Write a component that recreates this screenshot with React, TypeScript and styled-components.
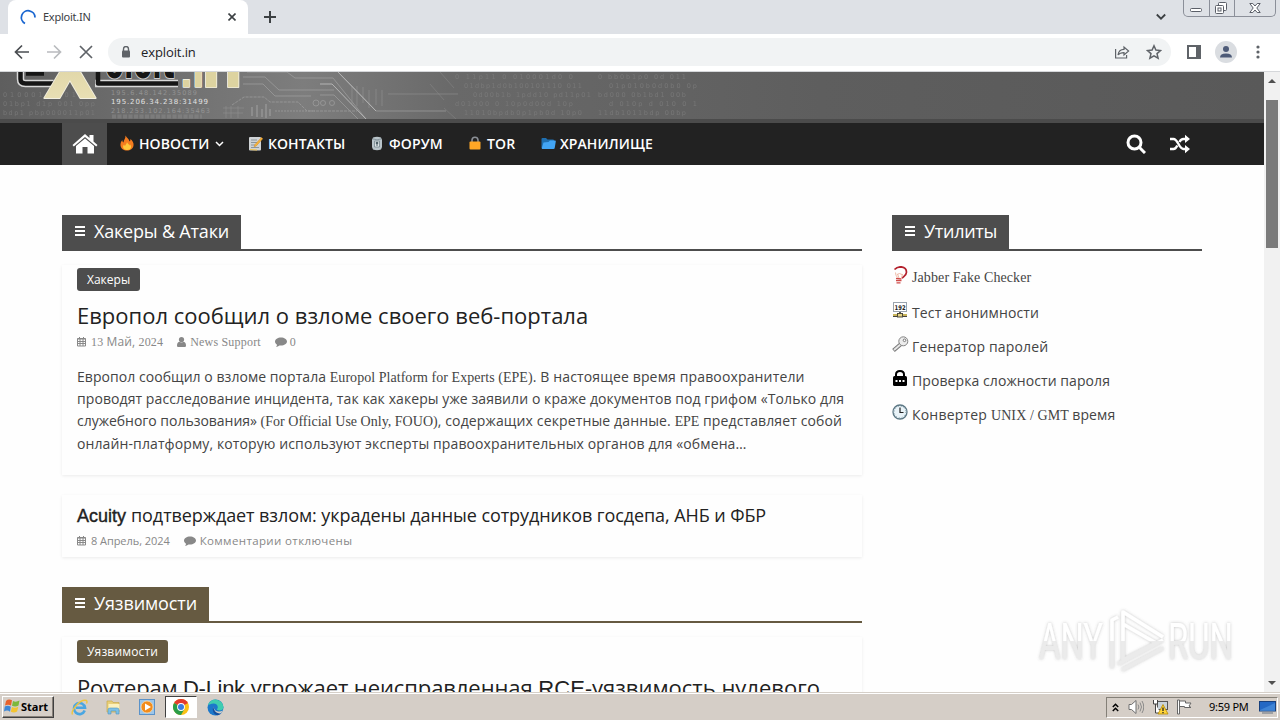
import React from "react";
import styled, { createGlobalStyle, css } from "styled-components";

const GlobalStyle = createGlobalStyle`
  * { box-sizing: border-box; }
  html, body { margin: 0; padding: 0; height: 720px; overflow: hidden; }
  svg { display: block; flex: none; }
`;

const sans = `"Open Sans", "Noto Sans", sans-serif`;
const serif = `"Liberation Serif", serif`;
const ui = `"Noto Sans", sans-serif`;

const Screen = styled.div`
  width: 1280px;
  height: 720px;
  display: flex;
  flex-direction: column;
  overflow: hidden;
  background: #fff;
  font-family: ${sans};
`;

const Txt = styled.span<{ $ls?: number; $size?: number; $serif?: boolean; $arial?: boolean; $heavy?: boolean }>`
  display: inline-block;
  white-space: pre;
  letter-spacing: ${(p) => p.$ls || 0}px;
  ${(p) => p.$size && css`font-size: ${p.$size}px;`}
  ${(p) => p.$serif && css`font-family: ${serif};`}
  ${(p) => p.$arial && css`font-family: "Liberation Sans", sans-serif;`}
  ${(p) => p.$heavy && css`-webkit-text-stroke: 0.4px currentColor;`}
`;

/* browser */
const TabStrip = styled.div`
  height: 34px;
  flex: none;
  display: flex;
  background: #dee1e6;
  padding-left: 8px;
`;

const Tab = styled.div`
  width: 240px;
  height: 34px;
  display: flex;
  align-items: center;
  padding: 0 12px 0 12px;
  background: #fff;
  border-radius: 8px 8px 0 0;
  font-family: ${ui};
  font-size: 11px;
  color: #3c4043;
`;

const TabTitle = styled.div`
  flex: 1;
  padding: 0 0 1px 6px;
`;

const NewTab = styled.div`
  padding: 11px 0 0 16px;
  flex: 1;
`;

const TabSearch = styled.div`
  padding: 13px 17px 0 0;
`;

const WindowButtons = styled.div`
  display: flex;
  width: 93px;
  height: 17px;
  margin-right: 4px;
  border: 1px solid #8b8f99;
  border-top: 0;
  border-radius: 0 0 5px 5px;
`;

const WindowButton = styled.div<{ $w: number }>`
  width: ${(p) => p.$w}px;
  display: flex;
  justify-content: center;
  & + & { border-left: 1px solid #8b8f99; }
`;

const Toolbar = styled.div`
  height: 38px;
  flex: none;
  display: flex;
  align-items: center;
  padding: 0 14px 1px 14px;
  border-bottom: 1px solid #d5d7da;
`;

const NavButtons = styled.div`
  display: flex;
  gap: 16px;
  width: 94px;
`;

const AddressBar = styled.div`
  width: 1063px;
  height: 28px;
  border-radius: 14px;
  background: #f1f3f4;
  display: flex;
  align-items: center;
  padding: 0 9px 0 12px;
  color: #202124;
`;

const Url = styled.div`
  flex: 1;
  padding-left: 9px;
  font-size: 13px;
`;

const BarActions = styled.div`
  display: flex;
  align-items: center;
  gap: 16px;
`;

const Tools = styled.div`
  flex: 1;
  display: flex;
  align-items: center;
  justify-content: space-between;
  padding-left: 16px;
`;

/* page */
const Viewport = styled.div`
  height: 620px;
  flex: none;
  display: flex;
`;

const Page = styled.div`
  width: 1264px;
  height: 620px;
  overflow: hidden;
  background: #fefefe;
`;

const Banner = styled.div`
  height: 51px;
  background: #5a5a5a;
  border-bottom: 4px solid #4b4b4b;
  overflow: hidden;
`;

const Menu = styled.div`
  height: 42px;
  background: #222;
  padding: 0 74px 0 62px;
  display: flex;
  align-items: center;
  color: #fff;
  font-size: 14px;
  font-weight: 600;
`;

const HomeLink = styled.div`
  width: 45px;
  height: 42px;
  background: #4d4d4d;
  display: flex;
  align-items: center;
  justify-content: center;
`;

const MenuItem = styled.div<{ $w: number; $gap?: number }>`
  width: ${(p) => p.$w}px;
  display: flex;
  align-items: center;
  gap: ${(p) => p.$gap || 4}px;
  padding: 0 0 2px 12px;
`;

const Caret = styled.div`
  padding: 1px 0 0 2px;
`;

const MenuTools = styled.div`
  flex: 1;
  display: flex;
  justify-content: flex-end;
  gap: 24px;
`;

const Content = styled.div`
  display: flex;
  gap: 30px;
  padding: 50px 62px 0;
`;

const Main = styled.div`
  width: 800px;
`;

const Aside = styled.div`
  width: 310px;
`;

const SectionHead = styled.div<{ $color: string; $mt?: number }>`
  height: 36px;
  margin-top: ${(p) => p.$mt || 0}px;
  border-bottom: 2px solid ${(p) => p.$color};
  display: flex;
`;

const SectionLabel = styled.div<{ $color: string }>`
  height: 36px;
  background: ${(p) => p.$color};
  color: #fff;
  display: flex;
  gap: 9px;
  padding: 0 12px 0 13px;
  font-size: 18px;
  line-height: 32px;
`;

const Burger = styled.div`
  width: 10px;
  height: 10px;
  margin-top: 11px;
  border-top: 2px solid #fff;
  border-bottom: 2px solid #fff;
  padding-top: 2px;
  &::before { content: ""; display: block; height: 2px; background: #fff; }
`;

const Card = styled.div<{ $h: number; $mt: number }>`
  height: ${(p) => p.$h}px;
  margin-top: ${(p) => p.$mt}px;
  padding: 3px 15px 0;
  box-shadow: 0 1px 3px rgba(0, 0, 0, 0.08);
`;

const Badge = styled.div<{ $color: string }>`
  width: fit-content;
  height: 23px;
  padding: 0 10px;
  border-radius: 3px;
  background: ${(p) => p.$color};
  color: #fff;
  font-size: 12px;
  line-height: 23px;
`;

const Title = styled.div<{ $small?: boolean }>`
  color: #222;
  white-space: nowrap;
  font-size: ${(p) => (p.$small ? 18 : 22)}px;
  line-height: ${(p) => (p.$small ? 34 : 30)}px;
  padding-top: ${(p) => (p.$small ? 0 : 9)}px;
`;

const Meta = styled.div<{ $mt?: number }>`
  display: flex;
  align-items: center;
  height: 16px;
  margin-top: ${(p) => p.$mt || 0}px;
  color: #888;
  font-size: 12px;
  line-height: 16px;
`;

const MetaItem = styled.div<{ $gap: number }>`
  display: flex;
  align-items: center;
  gap: ${(p) => p.$gap}px;
  margin-right: 14px;
`;

const Excerpt = styled.div`
  margin-top: 15.600px;
  color: #444;
  font-size: 14px;
  line-height: 22.4px;
`;

const Line = styled.div`
  height: 22.4px;
  white-space: nowrap;
`;

const ToolList = styled.div`
  padding-top: 14px;
`;

const Tool = styled.div<{ $h?: number }>`
  display: flex;
  gap: 4px;
  height: ${(p) => p.$h || 34}px;
  color: #444;
  font-size: 14px;
  line-height: 22px;
`;

const ToolIcon = styled.div`
  width: 16px;
  padding-top: 1px;
`;

const ToolText = styled.div`
  padding-top: 1px;
  white-space: nowrap;
`;

const Scrollbar = styled.div`
  width: 16px;
  background: #f1f1f1;
  display: flex;
  flex-direction: column;
  align-items: center;
  justify-content: space-between;
  padding: 7px 0 7px;
`;

const Thumb = styled.div`
  width: 12px;
  height: 148px;
  margin: 17px 0 auto;
  background: #7b7b7b;
`;

const Watermark = styled.div`
  position: absolute;
  left: 1032px;
  top: 602px;
`;

/* taskbar */
const Taskbar = styled.div`
  flex: 1;
  display: flex;
  align-items: center;
  background: #d5cec7;
  border-top: 1px solid #d5cfc8;
  box-shadow: inset 0 1px 0 #fff;
  padding: 1px 2px 0 2px;
  font-family: ${ui};
  font-size: 11px;
  color: #000;
`;

const StartButton = styled.div`
  width: 52px;
  height: 22px;
  display: flex;
  align-items: center;
  padding: 0 0 2px 1px;
  border: 1px solid;
  border-color: #fff #404040 #404040 #fff;
  box-shadow: inset -1px -1px 0 #878079;
  font-weight: 700;
`;

const Launchers = styled.div`
  display: flex;
  flex: 1;
  padding-left: 9px;
`;

const Launcher = styled.div<{ $active?: boolean }>`
  width: 32px;
  height: 22px;
  margin-right: 2px;
  display: flex;
  align-items: center;
  justify-content: center;
  ${(p) => p.$active && css`
    background: #fff;
    border: 1px solid;
    border-color: #404040 #fff #fff #404040;
  `}
`;

const Tray = styled.div`
  width: 172px;
  height: 21px;
  display: flex;
  align-items: center;
  border: 1px solid;
  border-color: #848078 #fff #fff #848078;
  padding: 0 1px 0 5px;
  gap: 8px;
`;

const Clock = styled.div`
  flex: 1;
  padding: 0 0 2px 7px;
`;

/* icons */
const Calendar = () => (
  <svg width="10" height="10" viewBox="0 0 10 10" stroke="#888" fill="none">
    <path d="M.5 1.500h8v7.500h-8zM.5 2h8M.5 4.500h8M.5 6.500h8M3 2v7M6 2v7M2.500 0v2M6.500 0v2" />
  </svg>
);

const Person = () => (
  <svg width="9" height="10" viewBox="0 0 9 10" fill="#888">
    <circle cx="4.500" cy="2.600" r="2.600" />
    <path d="M0 8.500C0 6 1.300 5 2.500 4.800c1.200.9 2.800.9 4 0C7.700 5 9 6 9 8.500c0 1-.6 1.500-1.500 1.500h-6C.6 10 0 9.500 0 8.500z" />
  </svg>
);

const Comment = () => (
  <svg width="12" height="10" viewBox="0 0 12 10" fill="#888">
    <path d="M6 .5c3.300 0 6 1.700 6 4s-2.700 4-6 4c-.6 0-1 0-1.500-.1C3.400 9.300 2.200 9.800 1 10c.6-.7 1-1.400 1-2.300C.8 7 0 5.800 0 4.500c0-2.300 2.700-4 6-4z" />
  </svg>
);

const digits = (seed: number, n: number) => {
  let s = "";
  let v = seed;
  for (let i = 0; i < n; i++) {
    v = (v * 73 + 41) % 997;
    s += v % 5 === 0 ? "0" : v % 7 === 0 ? " " : "01d0p1b"[v % 7];
  }
  return s;
};

const BannerArt = () => (
  <svg width="1264" height="47" viewBox="0 0 1264 47">
    <defs>
      <linearGradient id="bg" x1="0" x2="1" y1="0" y2="0">
        <stop offset="0" stopColor="#5e5e5e" />
        <stop offset=".1" stopColor="#6c6c6c" />
        <stop offset=".24" stopColor="#7d7d7d" />
        <stop offset=".36" stopColor="#696969" />
        <stop offset=".65" stopColor="#5e5e5e" />
        <stop offset="1" stopColor="#595959" />
      </linearGradient>
      <linearGradient id="cream" x1="0" x2="0" y1="0" y2="1">
        <stop offset="0" stopColor="#cfc48f" />
        <stop offset="1" stopColor="#efe6bd" />
      </linearGradient>
    </defs>
    <rect width="1264" height="47" fill="url(#bg)" />
    <g fontFamily="DejaVu Sans" fontSize="6.500" fill="#7e7e7e" opacity=".75">
      {[7, 16, 25, 34, 43].map((y, i) => (
        <React.Fragment key={y}>
          {i > 1 && <text x="3" y={y} textLength="92">{digits(i + 3, 17)}</text>}
          <text x={455 + (i % 3) * 9} y={y} textLength="118">{digits(i + 20, 22)}</text>
          <text x={598 + (i % 2) * 11} y={y} textLength="88">{digits(i + 50, 16)}</text>
        </React.Fragment>
      ))}
    </g>
    <g fontFamily="DejaVu Sans" fontSize="6.500" fill="#939393">
      <text x="111" y="23" textLength="86">195.6.48.142.35089</text>
      <text x="111" y="32" textLength="97" fontSize="7" fill="#e2e2e2">195.206.34.238:31499</text>
      <text x="111" y="40.500" textLength="99">218.253.102.164:35463</text>
    </g>
    <path d="M112 44.500h90" stroke="#8a8a8a" strokeWidth="4" strokeDasharray="4 1.500" opacity=".5" />
    <g fill="none" stroke="#a0a0a0" strokeWidth="1" opacity=".7">
      <path d="M243 5h22l14 13h55M243 12h20l12 12h36M247 0h40l8 6h38l33 41M338 0l38 39h70M320 23h14l24 24" />
      <path d="M232 33l12-8h20l6 5h28l9 9h50" strokeDasharray="3 1" />
      <path d="M223 36h21M223 41h20M226 34v12M231 34v12M238 34v12" opacity=".5" />
      <path d="M252 35v9M257 33v12M262 37v8M266 32v14M270 37v7" strokeWidth="1.500" />
      <path d="M275 39h40" strokeDasharray="2 1" />
      <path d="M352 14v18M357 14v20M363 15v16M369 18v18M376 17v16M382 18v16M388 22h70" opacity=".6" />
      <circle cx="316" cy="31" r="3" /><circle cx="323" cy="31" r="2.500" /><circle cx="332" cy="31" r="2.500" />
      <path d="M440 0l14 16M430 12l14 16M444 36l12 11" opacity=".4" />
    </g>
    <path d="M320 12h12l34 35M338 0l38 39" stroke="#b4b4b4" fill="none" />
    {/* logo, scrolled halfway under the toolbar */}
    <g fontFamily="DejaVu Sans" fontWeight="700" paintOrder="stroke" strokeLinejoin="round">
      <path d="M20.500 0v7q0 4.500 5 4.500h28M95 11.500h83" fill="none" stroke="#d8d8d8" strokeWidth="7.500" />
      <text x="105" y="6" fontSize="46" textLength="70" lengthAdjust="spacingAndGlyphs" fill="#161616" stroke="#cfcfcf" strokeWidth="2">oloit</text>
      <path d="M20.500 0v7q0 4.500 5 4.500h28M98 0v11.500h80M26 1.500h18" fill="none" stroke="#161616" strokeWidth="4.500" />
      <text x="43" y="26" fontSize="104" textLength="54" lengthAdjust="spacingAndGlyphs" fill="url(#cream)" stroke="#f3f0e2" strokeWidth="2">x</text>
      <text x="180" y="15" fontSize="38" textLength="24" lengthAdjust="spacingAndGlyphs" fill="#ddd3a0" stroke="#f3f0e2" strokeWidth="1.600">.i</text>
      <text x="201" y="15" fontSize="54" textLength="42" lengthAdjust="spacingAndGlyphs" fill="#ddd3a0" stroke="#f3f0e2" strokeWidth="1.600">n</text>
    </g>
  </svg>
);

const Fire = () => (
  <svg width="16" height="16" viewBox="0 0 16 16">
    <path d="M6.500.5C8 3 10 4 10.500 6.500c.8-.5 1-1.500.9-2.500C13.500 5.500 15 8 14.500 10.500 14 13.800 11.300 15.500 8 15.500S1.800 13.500 1.500 10.500C1.300 8.500 2 6.500 3.300 5c0 1.300.4 2 1.200 2.500C4.500 5 6.800 3.500 6.500.5z" fill="#f57c1f" />
    <path d="M8 7c.3 1.500 2 2 2.300 3.500.4-.3.500-.8.500-1.300 1 1 1.500 2 1.200 3.300-.4 1.700-2 2.500-4 2.500s-3.700-1-3.900-2.800c-.1-1 .3-2 1-2.700.1.800.5 1.200 1 1.400C6.300 9.500 7.800 9 8 7z" fill="#ffc93c" />
  </svg>
);

const Memo = () => (
  <svg width="15" height="15" viewBox="0 0 15 15">
    <rect x="1" y="1" width="12" height="13.500" rx="1" fill="#cfd3d6" />
    <path d="M3 4h6M3 6.500h6M3 9h4M3 11.500h8" stroke="#8b959b" />
    <path d="M13.500 1.500l1.200 1.200-6.500 7.300-2 .8.600-2z" fill="#f6b73c" stroke="#d98f2b" strokeWidth=".6" />
    <path d="M2 13.500L9 14" stroke="#f0c24b" />
  </svg>
);

const Barrel = () => (
  <svg width="12" height="15" viewBox="0 0 12 15">
    <path d="M2 1.500Q6 0 10 1.500L11 4v7l-1 2.500q-4 1.500-8 0L1 11V4z" fill="#b9c4ca" />
    <path d="M2 3q4 1.500 8 0M3.500 5h5v6h-5z" stroke="#75858d" fill="#dde4e7" strokeWidth=".8" />
    <circle cx="6" cy="7" r="1.300" fill="#4f6068" /><path d="M6 7v3" stroke="#4f6068" />
  </svg>
);

const Padlock = () => (
  <svg width="12" height="14" viewBox="0 0 12 14">
    <path d="M3 7V4.200a3 3 0 0 1 6 0V7" stroke="#8b8f96" strokeWidth="1.600" fill="none" />
    <rect x=".5" y="5.500" width="11" height="8" rx="1" fill="#ffa726" />
  </svg>
);

const Folder = () => (
  <svg width="15" height="13" viewBox="0 0 15 13">
    <path d="M.5 2q0-1 1-1H5l1.500 1.500H12q1 0 1 1V11H.5z" fill="#1f6fb0" />
    <path d="M2.500 5.500l5-.5 1.500-1.500h5q1 0 .8 1L13.700 11q-.2 1-1.200 1h-11Q.5 12 .8 11z" fill="#42a5f5" />
  </svg>
);

const Bulb = () => (
  <svg width="16" height="18" viewBox="0 0 16 18" fill="none">
    <path d="M2.500 3.500Q5 .8 9 .8q5.500.4 5.500 5.400c0 3-3 4.300-4.500 6" stroke="#b3202c" strokeWidth="1.700" />
    <path d="M3.500 6.500q0 3 2 5M5.500 8l1.500 4M10.500 8l-1 4M5 8.500l2.500-1 2.500 1" stroke="#eeb9a5" strokeWidth="1" />
    <path d="M4 12.500l5.500.5M4 14.700h5.500M4.500 16.800h4" stroke="#cf4a48" strokeWidth="1.300" />
  </svg>
);

const IpCard = () => (
  <svg width="16" height="16" viewBox="0 0 16 16">
    <rect x="1.500" y=".5" width="13" height="9" fill="#fff" stroke="#9aa3ad" />
    <text x="2.600" y="7.700" fontFamily="DejaVu Sans" fontWeight="700" fontSize="6.500" textLength="11" lengthAdjust="spacingAndGlyphs" fill="#222">192</text>
    <path d="M8 10v2" stroke="#555" strokeWidth="2" />
    <path d="M1 13h14" stroke="#c9b458" strokeWidth="2" /><path d="M1 14.500h14" stroke="#444" />
    <rect x="5.500" y="11.500" width="5" height="3.500" fill="#e3d286" stroke="#4c4a3a" />
  </svg>
);

const Key = () => (
  <svg width="17" height="17" viewBox="0 0 17 17">
    <path d="M9 8L1.500 14.500" stroke="#777" strokeWidth="4" /><path d="M9 8L2 14" stroke="#e6e6e6" strokeWidth="2" />
    <circle cx="11.300" cy="5.300" r="4.500" fill="#ececec" stroke="#858585" /><circle cx="12.500" cy="4.300" r="1.300" fill="#fff" stroke="#777" />
  </svg>
);

const BlackLock = () => (
  <svg width="16" height="17" viewBox="0 0 16 17">
    <path d="M4 7V4.500Q4 1 8 1t4 3.500V7" fill="none" stroke="#000" strokeWidth="2" />
    <rect x="1" y="6" width="14" height="10" rx="1.500" fill="#000" />
    <path d="M3.500 11h2M7 11h2M10.500 11h2" stroke="#fff" strokeWidth="2" />
  </svg>
);

const ClockFace = () => (
  <svg width="16" height="16" viewBox="0 0 16 16">
    <circle cx="8" cy="8" r="7" fill="#e9f3f8" stroke="#5b7683" strokeWidth="1.300" />
    <circle cx="8" cy="8" r="5.700" fill="none" stroke="#8fa9b5" strokeWidth="1" strokeDasharray="1 2" />
    <path d="M8 3.500V8.500h3.500" fill="none" stroke="#222" strokeWidth="1.200" />
  </svg>
);

const Chrome = () => (
  <svg width="16" height="16" viewBox="0 0 16 16">
    <circle cx="8" cy="8" r="8" fill="#fbc116" />
    <path d="M8 8L1.070 4A8 8 0 0 1 14.930 4z" fill="#e33b2e" />
    <path d="M8 8L1.070 4A8 8 0 0 0 8 16l3.460-6z" fill="#2a9d49" />
    <circle cx="8" cy="8" r="3.900" fill="#fff" /><circle cx="8" cy="8" r="3" fill="#3a7de0" />
  </svg>
);

const Explorer = () => (
  <svg width="17" height="17" viewBox="0 0 17 17">
    <path d="M13.700 11.500A5.500 5.500 0 1 1 14 8.800H5" fill="none" stroke="#4aa6e2" strokeWidth="2.600" />
    <path d="M1.500 15.500C-.5 12 9-.5 15.500 1.500q1 .8 0 3" fill="none" stroke="#efc53f" strokeWidth="1.400" />
  </svg>
);

const FileManager = () => (
  <svg width="17" height="16" viewBox="0 0 17 16">
    <path d="M2 2h5l1 1.500h6V13H2z" fill="#e8cf79" stroke="#c9a94c" strokeWidth=".7" />
    <rect x="3.500" y="5" width="11" height="6" fill="#fbf1be" />
    <path d="M3 15v-4q0-2 2-2h7q2 0 2 2v4h-3v-3H6v3z" fill="#7cc0e6" stroke="#4d94bf" strokeWidth=".6" />
  </svg>
);

const MediaPlayer = () => (
  <svg width="16" height="16" viewBox="0 0 16 16">
    <rect x=".5" y=".5" width="15" height="15" fill="#9cc6ea" stroke="#5a92c9" />
    <circle cx="8" cy="8" r="6" fill="#f28c1c" stroke="#fbd9a8" strokeWidth=".8" />
    <path d="M6 4.500v7L12 8z" fill="#fff" />
  </svg>
);

const Edge = () => (
  <svg width="17" height="17" viewBox="0 0 17 17">
    <circle cx="8.500" cy="8.500" r="8" fill="#1c78cb" />
    <path d="M.8 6.500A8 8 0 0 1 16.500 8c0 2.500-2 3.500-4 3.500-1.500 0-2.500-.6-2.500-1.200 0-.5.8-.8.8-2C10.800 6 9 4.500 6.500 4.500 4 4.500 2 5.500.8 6.500z" fill="#3fcdb0" />
    <path d="M6.500 7.500c-1.500 4 1.500 8 6.500 7.200C15 13.500 16 12.300 15.800 11.600 13 13.500 7 13 6.500 7.500z" fill="#d5cec7" />
    <path d="M6.500 7.500c-2 4 .5 8.500 4 8.700 1.500 0 3-.8 3.800-1.600C10 15 6.500 12 6.500 7.500z" fill="#14509e" />
  </svg>
);

const Flag = () => (
  <svg width="17" height="16" viewBox="0 0 17 16">
    <path d="M2 3q2.500-2.500 6-.7L7 7.500Q4 6 1 7.500z" fill="#e8622c" />
    <path d="M9 3q3 1.500 6.500-.5l-1 5q-3 2-6.500.3z" fill="#7db83b" />
    <path d="M.8 8.500q3-1.500 6 .2L6 13.700q-2.500-2-6-.3z" fill="#3e87d6" />
    <path d="M8 9q3 1.600 6.300-.3l-1.200 4.800q-3 1.800-6.300.3z" fill="#f4c430" />
  </svg>
);

const AnyRun = () => (
  <svg width="210" height="84" viewBox="0 0 210 84">
    <defs>
      <filter id="soft" x="-10%" y="-10%" width="120%" height="120%">
        <feDropShadow dx="0" dy="0" stdDeviation="1.500" floodColor="#666" floodOpacity=".4" />
      </filter>
      <linearGradient id="wm" gradientUnits="userSpaceOnUse" x1="0" x2="0" y1="0" y2="78">
        <stop offset=".5" stopColor="#fff" />
        <stop offset=".5" stopColor="#ebebeb" />
      </linearGradient>
    </defs>
    <g filter="url(#soft)" fill="url(#wm)" fontFamily="Roboto" fontWeight="400" fontSize="50">
      <text x="7" y="57" textLength="64" lengthAdjust="spacingAndGlyphs">ANY</text>
      <text x="136" y="57" textLength="65" lengthAdjust="spacingAndGlyphs">RUN</text>
      <path d="M91 54V10l40 25M80 64V18l6-3M91 26v32l33-17-33-19M80 58v8M90 68l41-22M86 62l45-24" fill="none" stroke="url(#wm)" strokeWidth="3.600" strokeLinejoin="round" />
    </g>
  </svg>
);

const UpArrows = () => (
  <svg width="7" height="9" viewBox="0 0 7 9" fill="none" stroke="#000" strokeWidth="1.500"><path d="M.8 4l2.700-2.700L6.200 4M.8 8l2.700-2.700L6.200 8" /></svg>
);

const Speaker = () => (
  <svg width="17" height="16" viewBox="0 0 17 16" fill="none" stroke="#6f6f6f">
    <path d="M2 5.500h2.500L9 1.500v13L4.500 10.500H2z" fill="#fff" /><path d="M11 5.500q1.800 2.500 0 5M13 3.500q3 4.500 0 9M15 2q3.500 6 0 12" stroke="#8a8a8a" />
  </svg>
);

const Network = () => (
  <svg width="17" height="16" viewBox="0 0 17 16">
    <rect x="5.500" y="2.500" width="10" height="8" fill="#c9d3da" stroke="#555" />
    <path d="M1.500 1v4h4V1M3.500 5v9h5" fill="#fff" stroke="#444" />
    <path d="M11 5.500l5 9.500H6z" fill="#ffd53a" stroke="#b78a00" strokeWidth=".8" /><path d="M11 8.500v3.500M11 13v1.200" stroke="#222" strokeWidth="1.300" />
  </svg>
);

const ActionFlag = () => (
  <svg width="17" height="16" viewBox="0 0 17 16" fill="#fff" stroke="#666">
    <path d="M.5 1v14h2V1zM2.500 2h6v2H14l-2 3 2 1.500H7.500v-1h-5z" />
  </svg>
);

const Desktop = () => (
  <svg width="17" height="16" viewBox="0 0 17 16">
    <rect x=".5" y="2.500" width="16" height="9.500" fill="#2468c4" stroke="#18407d" /><path d="M1 11L16 4v8H1z" fill="#5aa0e8" opacity=".5" />
    <path d="M3 14h11" stroke="#8b9098" strokeWidth="1.500" />
  </svg>
);

export default function App() {
  return (
    <Screen>
      <GlobalStyle />
      <TabStrip>
        <Tab>
          <svg width="17" height="17" viewBox="0 0 17 17" fill="none" stroke="#1a66d0" strokeWidth="1.800">
            <path d="M5 14.500A6.800 6.800 0 1 1 15 8.500" />
          </svg>
          <TabTitle><Txt $ls={-0.25}>Exploit.IN</Txt></TabTitle>
          <svg width="8" height="8" viewBox="0 0 8 8" stroke="#3c4043" strokeWidth="1.600"><path d="M.5.5l7 7M7.500.5l-7 7" /></svg>
        </Tab>
        <NewTab>
          <svg width="12" height="12" viewBox="0 0 12 12" stroke="#3c4043" strokeWidth="2"><path d="M6 0v12M0 6h12" /></svg>
        </NewTab>
        <TabSearch>
          <svg width="10" height="8" viewBox="0 0 10 8" fill="none" stroke="#3c4043" strokeWidth="1.800"><path d="M.8 1.500L5 5.700l4.200-4.200" /></svg>
        </TabSearch>
        <WindowButtons>
          <WindowButton $w={25}>
            <svg width="13" height="16" viewBox="0 0 13 16"><rect x=".5" y="8.500" width="11" height="3" rx="1" fill="#fff" stroke="#5b5f68" /></svg>
          </WindowButton>
          <WindowButton $w={25}>
            <svg width="14" height="16" viewBox="0 0 14 16" fill="#fff" stroke="#5b5f68">
              <rect x="3.500" y="2.500" width="8" height="8" rx="1" /><rect x=".5" y="5.500" width="8" height="8" rx="1" /><rect x="3" y="8" width="3" height="3" />
            </svg>
          </WindowButton>
          <WindowButton $w={41}>
            <svg width="12" height="16" viewBox="0 0 12 16" fill="#fff" stroke="#5b5f68">
              <path d="M.8 3.500h3L6 6l2.200-2.500h3L7.800 8l3.400 4.500h-3L6 10l-2.200 2.500h-3L4.200 8z" />
            </svg>
          </WindowButton>
        </WindowButtons>
      </TabStrip>
      <Toolbar>
        <NavButtons>
          <svg width="16" height="16" viewBox="0 0 16 16" fill="none" stroke="#4a4d51" strokeWidth="1.700"><path d="M15 8H2M8 1.500L1.500 8 8 14.500" /></svg>
          <svg width="16" height="16" viewBox="0 0 16 16" fill="none" stroke="#b9bbbe" strokeWidth="1.700"><path d="M1 8h13M8 1.500L14.500 8 8 14.500" /></svg>
          <svg width="16" height="16" viewBox="0 0 16 16" fill="none" stroke="#5f6368" strokeWidth="1.700"><path d="M2 2l12 12M14 2L2 14" /></svg>
        </NavButtons>
        <AddressBar>
          <svg width="12" height="12" viewBox="0 0 12 12">
            <path d="M3.500 5V3a2.500 2.500 0 0 1 5 0v2" fill="none" stroke="#5f6368" strokeWidth="1.400" /><rect x="2" y="4.500" width="8" height="7" rx="1" fill="#5f6368" />
          </svg>
          <Url><Txt $ls={-0.1}>exploit.in</Txt></Url>
          <BarActions>
            <svg width="16" height="16" viewBox="0 0 16 16" fill="none" stroke="#5f6368" strokeWidth="1.200">
              <path d="M1.600 5v9h11v-3M4 11c.6-4 3-5.600 6-5.600V3l4.600 4-4.600 4V8.600C7.500 8.600 5.500 9 4 11z" />
            </svg>
            <svg width="16" height="16" viewBox="0 0 16 16" fill="none" stroke="#5f6368" strokeWidth="1.500">
              <path d="M8 1.800l1.900 4.300 4.600.4-3.500 3.100 1.100 4.600L8 11.800l-4.100 2.400L5 9.600 1.500 6.500l4.600-.4z" />
            </svg>
          </BarActions>
        </AddressBar>
        <Tools>
          <svg width="14" height="14" viewBox="0 0 14 14"><rect x="1" y="1" width="12" height="12" fill="none" stroke="#5f6368" strokeWidth="2" /><path d="M9 1h4v12H9z" fill="#5f6368" /></svg>
          <svg width="22" height="22" viewBox="0 0 22 22">
            <circle cx="11" cy="11" r="11" fill="#dadde1" /><circle cx="11" cy="8" r="3" fill="#4e5b78" /><path d="M5 16.500q0-4 6-4t6 4z" fill="#4e5b78" />
          </svg>
          <svg width="16" height="14" viewBox="0 0 16 14" fill="#5f6368"><circle cx="8" cy="2" r="1.600" /><circle cx="8" cy="7" r="1.600" /><circle cx="8" cy="12" r="1.600" /></svg>
        </Tools>
      </Toolbar>

      <Viewport>
        <Page>
          <Banner><BannerArt /></Banner>
          <Menu>
            <HomeLink>
              <svg width="26" height="22" viewBox="0 0 26 22" fill="#fff">
                <path d="M13 1l4.500 4V2h4v6.600L25.500 12l-1.300 1.500L13 4 1.800 13.500.5 12z" /><path d="M13 5.500l9 7.500v7.500h-6.500V14h-5v6.500H4V13z" />
              </svg>
            </HomeLink>
            <MenuItem $w={129}>
              <Fire /><Txt $ls={0.1}>НОВОСТИ</Txt>
              <Caret><svg width="9" height="6" viewBox="0 0 9 6" fill="none" stroke="#fff" strokeWidth="1.500"><path d="M1 1l3.500 3.500L8 1" /></svg></Caret>
            </MenuItem>
            <MenuItem $w={123} $gap={5}><Memo /><Txt $ls={0.05}>КОНТАКТЫ</Txt></MenuItem>
            <MenuItem $w={98} $gap={6}><Barrel /><Txt $ls={0.15}>ФОРУМ</Txt></MenuItem>
            <MenuItem $w={72} $gap={6}><Padlock /><Txt $ls={0.2}>TOR</Txt></MenuItem>
            <MenuItem $w={125}><Folder /><Txt $ls={0.08}>ХРАНИЛИЩЕ</Txt></MenuItem>
            <MenuTools>
              <svg width="20" height="20" viewBox="0 0 20 20" fill="none" stroke="#fff" strokeWidth="3"><circle cx="8.500" cy="8.500" r="6.500" /><path d="M13 13l6 6" /></svg>
              <svg width="20" height="20" viewBox="0 0 20 20" fill="none" stroke="#fff" strokeWidth="2.400">
                <path d="M0 5h3.500C8 5 9 15 13.500 15H16M0 15h3.500c2 0 3-1.700 3.800-3.500M9.500 8C10.300 6.300 11.500 5 13.500 5H16" /><path d="M15 .8V9l5-4zM15 11v8.200l5-4.200z" fill="#fff" stroke="none" />
              </svg>
            </MenuTools>
          </Menu>
          <Content>
            <Main>
              <SectionHead $color="#4d4d4d">
                <SectionLabel $color="#4d4d4d"><Burger /><Txt $ls={-0.193}>Хакеры &amp; Атаки</Txt></SectionLabel>
              </SectionHead>
              <Card $h={210} $mt={14}>
                <Badge $color="#4d4d4d"><Txt>Хакеры</Txt></Badge>
                <Title><Txt>Европол сообщил о взломе своего веб-портала</Txt></Title>
                <Meta $mt={4}>
                  <MetaItem $gap={4}><Calendar /><Txt $ls={0.14}><Txt $serif $ls={0.14}>13</Txt> Май, <Txt $serif $ls={0.14}>2024</Txt></Txt></MetaItem>
                  <MetaItem $gap={4}><Person /><Txt $serif $ls={0.2}>News Support</Txt></MetaItem>
                  <MetaItem $gap={3}><Comment /><Txt $serif>0</Txt></MetaItem>
                </Meta>
                <Excerpt>
                  <Line><Txt $ls={0.05}>Европол сообщил о взломе портала </Txt><Txt $serif $ls={0.045}>Europol Platform for Experts (EPE)</Txt><Txt $ls={0.145}>. В настоящее время правоохранители</Txt></Line>
                  <Line><Txt $ls={0.08}>проводят расследование инцидента, так как хакеры уже заявили о краже документов под грифом «Только для</Txt></Line>
                  <Line><Txt $ls={-0.02}>служебного пользования» </Txt><Txt $serif $ls={0.02}>(For Official Use Only, FOUO)</Txt><Txt $ls={0.135}>, содержащих секретные данные. </Txt><Txt $serif $ls={-0.1}>EPE</Txt><Txt $ls={0.12}> представляет собой</Txt></Line>
                  <Line><Txt $ls={0.11}>онлайн-платформу, которую используют эксперты правоохранительных органов для «обмена…</Txt></Line>
                </Excerpt>
              </Card>
              <Card $h={62} $mt={20}>
                <Title $small><Txt $arial $heavy>Acuity </Txt><Txt $ls={-0.08}>подтверждает взлом: украдены данные сотрудников госдепа, АНБ и ФБР</Txt></Title>
                <Meta>
                  <MetaItem $gap={4}><Calendar /><Txt $size={11} $ls={-0.06}>8 Апрель, 2024</Txt></MetaItem>
                  <MetaItem $gap={4}><Comment /><Txt $size={11.5} $ls={0.37}>Комментарии отключены</Txt></MetaItem>
                </Meta>
              </Card>
              <SectionHead $color="#665a41" $mt={30}>
                <SectionLabel $color="#665a41"><Burger /><Txt $ls={-0.11}>Уязвимости</Txt></SectionLabel>
              </SectionHead>
              <Card $h={210} $mt={14}>
                <Badge $color="#665a41"><Txt $ls={0.16}>Уязвимости</Txt></Badge>
                <Title><Txt $ls={-0.19}>Роутерам </Txt><Txt $arial $ls={-0.3}>D-Link </Txt><Txt $ls={-0.09}>угрожает неисправленная </Txt><Txt $arial $ls={0.1}>RCE</Txt><Txt>-уязвимость нулевого</Txt></Title>
              </Card>
            </Main>
            <Aside>
              <SectionHead $color="#4d4d4d">
                <SectionLabel $color="#4d4d4d"><Burger /><Txt $ls={-0.3}>Утилиты</Txt></SectionLabel>
              </SectionHead>
              <ToolList>
                <Tool $h={36}><ToolIcon><Bulb /></ToolIcon><ToolText><Txt $serif $ls={0.1}>Jabber Fake Checker</Txt></ToolText></Tool>
                <Tool><ToolIcon><IpCard /></ToolIcon><ToolText><Txt $ls={0.12}>Тест анонимности</Txt></ToolText></Tool>
                <Tool><ToolIcon><Key /></ToolIcon><ToolText><Txt $ls={0.16}>Генератор паролей</Txt></ToolText></Tool>
                <Tool><ToolIcon><BlackLock /></ToolIcon><ToolText><Txt $ls={0.08}>Проверка сложности пароля</Txt></ToolText></Tool>
                <Tool><ToolIcon><ClockFace /></ToolIcon><ToolText><Txt $ls={0.2}>Конвертер </Txt><Txt $serif $ls={0.1}>UNIX / GMT </Txt><Txt $ls={0.1}>время</Txt></ToolText></Tool>
              </ToolList>
            </Aside>
          </Content>
        </Page>
        <Scrollbar>
          <svg width="8" height="4" viewBox="0 0 8 4"><path d="M0 4l4-4 4 4z" fill="#505050" /></svg>
          <Thumb />
          <svg width="8" height="4" viewBox="0 0 8 4"><path d="M0 0l4 4 4-4z" fill="#505050" /></svg>
        </Scrollbar>
      </Viewport>

      <Taskbar>
        <StartButton><Flag /><Txt>Start</Txt></StartButton>
        <Launchers>
          <Launcher><Explorer /></Launcher>
          <Launcher><FileManager /></Launcher>
          <Launcher><MediaPlayer /></Launcher>
          <Launcher $active><Chrome /></Launcher>
          <Launcher><Edge /></Launcher>
        </Launchers>
        <Tray>
          <UpArrows />
          <Speaker />
          <Network />
          <ActionFlag />
          <Clock><Txt $ls={-0.25}>9:59 PM</Txt></Clock>
          <Desktop />
        </Tray>
      </Taskbar>
      <Watermark><AnyRun /></Watermark>
    </Screen>
  );
}
